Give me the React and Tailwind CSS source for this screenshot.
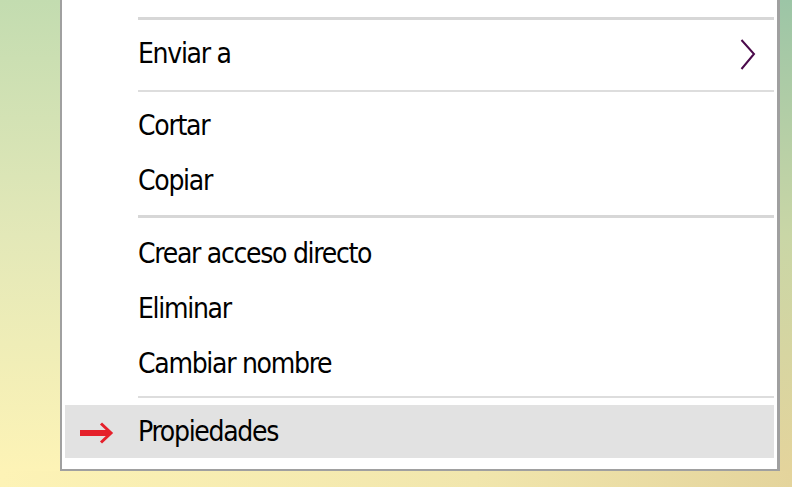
import React from 'react';

const Separator = ({ h, top, thick }) => (
  <div className={`${h} ${top} shrink-0`}>
    <div className={`ml-[76px] mr-[3px] ${thick ? 'h-[3px] bg-[#d7d7d7]' : 'h-[2px] bg-[#dddddd]'}`} />
  </div>
);

const Item = ({ label, children }) => (
  <div className="h-[55px] shrink-0 flex items-center pl-[76px]">
    <span className="text-[28px] leading-none tracking-[-1.3px] text-black">{label}</span>
    {children}
  </div>
);

const Chevron = () => (
  <svg width="16" height="32" viewBox="0 0 16 32" className="ml-auto mr-[21px] mt-[3px]">
    <polyline points="1.5,1 14,15 1.5,30" fill="none" stroke="#4b0a4b" strokeWidth="2" />
  </svg>
);

const RedArrow = () => (
  <svg width="34" height="24" viewBox="0 0 34 24" className="shrink-0">
    <rect x="0" y="10" width="29" height="6" fill="#e5202b" />
    <polyline points="21,3.5 31,13 21,22.5" fill="none" stroke="#e5202b" strokeWidth="3" />
  </svg>
);

const App = () => {
  return (
    <div className="h-screen w-full flex flex-col bg-white font-['DejaVu_Sans_Condensed','DejaVu_Sans',sans-serif]">
      <div className="flex flex-1 min-h-0">
        <div className="w-[60px] shrink-0 bg-[linear-gradient(to_bottom,#c3dcb0,#e3e8b8_50%,#fdf3b6)]" />
        <div className="flex-1 flex flex-col bg-white border-l-2 border-r-[3px] border-b-2 border-[#a0a0a0]">
          <div className="h-[26px] shrink-0 pt-[17px]">
            <div className="ml-[76px] mr-[3px] h-[3px] bg-[#d7d7d7]" />
          </div>
          <Item label="Enviar a">
            <Chevron />
          </Item>
          <Separator h="h-[17px]" top="pt-[9px]" />
          <Item label="Cortar" />
          <Item label="Copiar" />
          <Separator h="h-[18px]" top="pt-[7px]" thick />
          <Item label="Crear acceso directo" />
          <Item label="Eliminar" />
          <Item label="Cambiar nombre" />
          <Separator h="h-[14px]" top="pt-[5px]" />
          <div className="h-[53px] shrink-0 mx-[3px] bg-[#e2e2e2] flex items-center pl-[15px]">
            <RedArrow />
            <span className="ml-[24px] text-[28px] leading-none tracking-[-1.3px] text-black">Propiedades</span>
          </div>
          <div className="flex-1" />
        </div>
        <div className="w-[12px] shrink-0 bg-[linear-gradient(to_bottom,#9cc5a6,#c9d6a6_50%,#e4d49c)]" />
      </div>
      <div className="h-[16px] shrink-0 bg-[linear-gradient(to_right,#fdf3b6,#f1e6ad_60%,#e4d49c)]" />
      <div className="h-[5px] shrink-0 bg-white" />
    </div>
  );
};

export default App;
